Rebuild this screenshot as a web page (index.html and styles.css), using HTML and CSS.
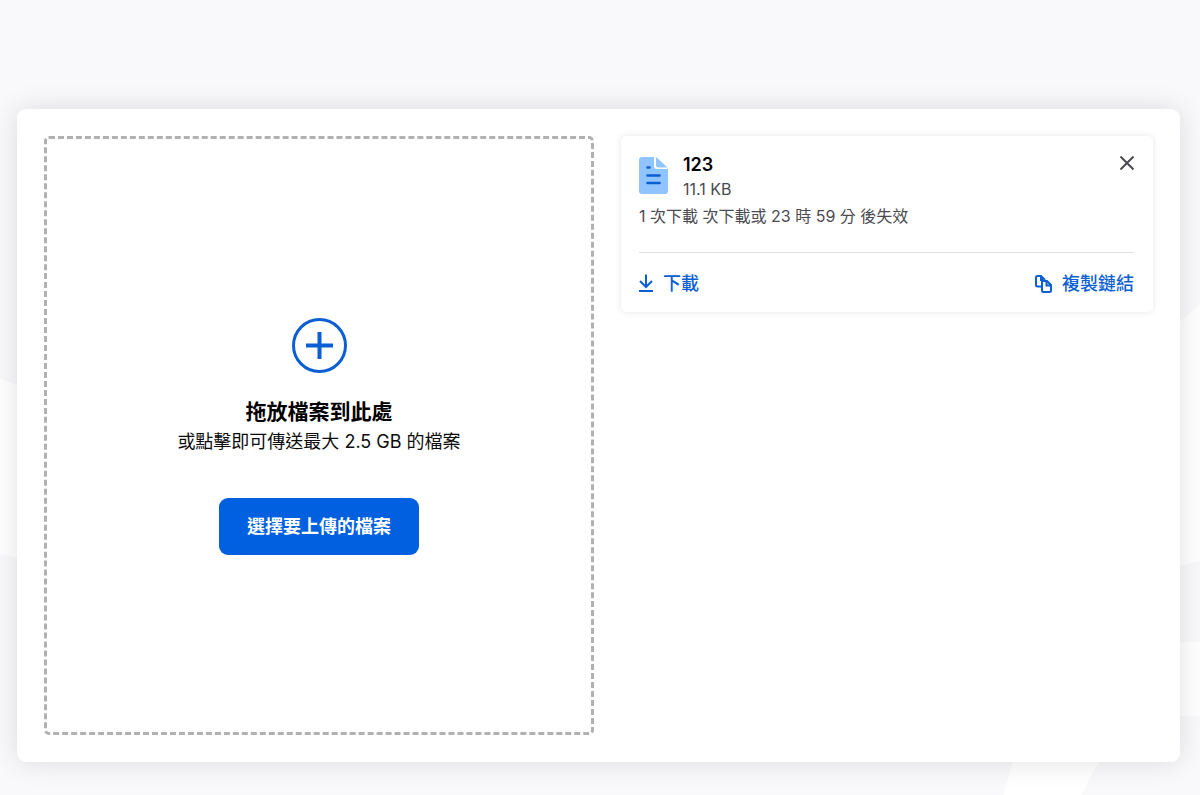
FILE: index.html
```html
<!DOCTYPE html>
<html lang="zh-TW">
<head>
    <meta charset="UTF-8">
    <meta name="viewport" content="width=device-width, initial-scale=1.0">
    <title>Send</title>
    <link rel="stylesheet" href="styles.css">
</head>
<body>
    <svg class="backdrop" viewBox="0 0 1200 795" preserveAspectRatio="none" aria-hidden="true">
        <path d="M0 378L40 394V562L0 554Z"/>
        <path d="M1160 340Q1180 321 1200 304V561L1160 571Z"/>
        <path d="M1160 642H1200V716H1160Z"/>
        <path d="M1018 745Q1010 770 1004 795H1081Q1091 776 1107 745Z"/>
    </svg>

    <main class="panel">
        <section class="dropzone">
            <svg class="plus" viewBox="0 0 55 55" aria-hidden="true">
                <circle cx="27.5" cy="27.5" r="26"/>
                <path d="M27.5 14V41M14 27.5H41" stroke-width="4"/>
            </svg>
            <h1 class="title">拖放檔案到此處</h1>
            <p class="hint">或點擊即可傳送最大 2.5 GB 的檔案</p>
            <button type="button" class="upload">選擇要上傳的檔案</button>
        </section>

        <section class="files">
            <article class="file">
                <header class="file-head">
                    <svg class="file-icon" viewBox="0 0 29 37" aria-hidden="true">
                        <path d="M3 0H15V9Q15 12 18 12H29V34Q29 37 26 37H3Q0 37 0 34V3Q0 0 3 0Z" fill="#90c4fe"/>
                        <path d="M17 0L28.5 10.5H19Q17 10.5 17 8.5Z" fill="#90c4fe"/>
                        <path d="M8.5 10.5H10.5M8.5 18.5H20.5M8.5 26H20.5" fill="none" stroke="#0b5fd3" stroke-width="2.6" stroke-linecap="round"/>
                    </svg>
                    <div class="file-info">
                        <h2 class="file-name">123</h2>
                        <p class="file-size">11.1 KB</p>
                    </div>
                    <button type="button" class="close" aria-label="刪除">
                        <svg viewBox="0 0 14 14" aria-hidden="true"><path d="M0.5 0.5L13.5 13.5M13.5 0.5L0.5 13.5"/></svg>
                    </button>
                </header>
                <p class="expiry">1 次下載 次下載或 23 時 59 分 後失效</p>
                <footer class="actions">
                    <a class="action" href="#download">
                        <svg class="download-icon" viewBox="0 0 14 20" aria-hidden="true"><path d="M7 0.5V13M1 7L7 13L13 7M0 17H14"/></svg>
                        下載
                    </a>
                    <button type="button" class="action copy">
                        <svg class="copy-icon" viewBox="0 0 17 18" aria-hidden="true">
                            <path d="M6 11.5H2.5Q1 11.5 1 10V2.5Q1 1 2.5 1H6L10 5M6 1V5H8"/>
                            <path d="M7.5 6H12L16 10V15.5Q16 17 14.5 17H8.5Q7 17 7 15.5V6.5ZM11.5 6V10.5H16"/>
                        </svg>
                        複製鏈結
                    </button>
                </footer>
            </article>
        </section>
    </main>
</body>
</html>
```

FILE: styles.css
```css
* {
    box-sizing: border-box;
}

body {
    display: flex;
    flex-direction: column;
    min-height: 100vh;
    margin: 0;
    padding: 109px 20px 33px 17px;
    background-color: #f9f9fb;
    color: #0c0c0d;
    font-family: Inter, "Noto Sans CJK TC", sans-serif;
}

h1, h2, p {
    margin: 0;
}

button {
    border: 0;
    padding: 0;
    background: none;
    font-family: inherit;
    cursor: pointer;
}

.backdrop {
    position: absolute;
    top: 0;
    left: 0;
    width: 100%;
    height: 100%;
    fill: #ffffff;
    z-index: -1;
}

.panel {
    flex: 1;
    display: grid;
    grid-template-columns: 550fr 532fr;
    gap: 27px;
    padding: 27px;
    border-radius: 9px;
    background-color: #ffffff;
    box-shadow: 0 0 28px rgba(12, 12, 13, 0.12);
}

.dropzone {
    display: flex;
    flex-direction: column;
    align-items: center;
    justify-content: center;
    padding-top: 1px;
    border: 3px dashed #b1b1b3;
    border-radius: 5px;
    text-align: center;
}

.plus {
    width: 55px;
    height: 55px;
    margin-bottom: 24px;
    fill: none;
    stroke: #0b5fd3;
    stroke-width: 3;
}

.title {
    font-size: 21px;
    line-height: 30px;
    font-weight: 700;
    color: #000000;
}

.hint {
    margin-bottom: 41px;
    font-size: 18px;
    line-height: 30px;
}

.upload {
    height: 57px;
    padding: 0 28px 2px;
    border-radius: 9px;
    background-color: #0060df;
    color: #ffffff;
    font-size: 18px;
    font-weight: 700;
}

.file {
    padding: 17px 19px 15px 18px;
    border-radius: 5px;
    box-shadow: 0 0 6px rgba(12, 12, 13, 0.1);
}

.file-head {
    display: flex;
    align-items: flex-start;
}

.file-icon {
    width: 29px;
    height: 37px;
    margin: 4px 15px 0 0;
}

.file-info {
    flex: 1;
}

.file-name {
    font-size: 18px;
    line-height: 24px;
    font-weight: 600;
    color: #000000;
}

.file-size {
    font-size: 16px;
    line-height: 24px;
    color: #4a4a4f;
}

.close {
    display: flex;
    padding-top: 3px;
}

.close svg {
    width: 14px;
    height: 14px;
    fill: none;
    stroke: #4a4a4f;
    stroke-width: 2;
}

.expiry {
    margin-top: 3px;
    font-size: 16px;
    line-height: 24px;
    color: #4a4a4f;
}

.actions {
    display: flex;
    justify-content: space-between;
    margin-top: 24px;
    padding-top: 18px;
    border-top: 1px solid #dfe1e3;
}

.action {
    display: flex;
    align-items: center;
    gap: 10px;
    color: #0b5fd3;
    font-size: 18px;
    line-height: 26px;
    font-weight: 500;
    text-decoration: none;
}

.action svg {
    fill: none;
    stroke: #0b5fd3;
    stroke-width: 2;
}

.download-icon {
    width: 14px;
    height: 20px;
}

.copy-icon {
    width: 17px;
    height: 18px;
}
```
